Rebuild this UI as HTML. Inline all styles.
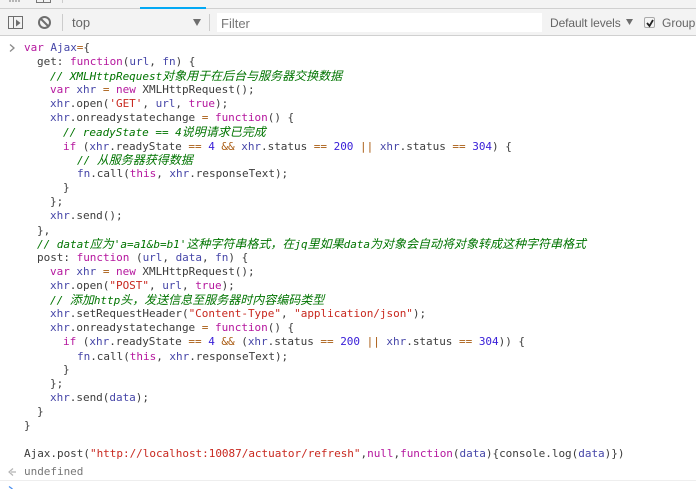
<!DOCTYPE html>
<html><head><meta charset="utf-8"><style>
html,body{margin:0;padding:0;background:#fff;width:696px;height:489px;overflow:hidden}
#w{position:relative;width:696px;height:489px;overflow:hidden}
.bar{position:absolute;left:0;top:9px;width:696px;height:26px;background:#f3f3f3}
.top{position:absolute;left:0;top:0;width:696px;height:8px;background:#f3f3f3}
.ab{position:absolute}
#code{position:absolute;left:0;top:1px;width:696px;height:488px;filter:blur(.25px)}
.l{position:absolute;white-space:pre;font:11px/14px "DejaVu Sans Mono","Noto Sans CJK SC",monospace;letter-spacing:-.025px;color:#3c3c3c;height:14px}
.k{color:#b5179e}.v{color:#4646a8}.s{color:#c8281f}.n{color:#3a20d8}.o{color:#a85a10}
.c{color:#007400;font-style:italic}
.z{font-family:"WenQuanYi Zen Hei","Noto Sans CJK SC",sans-serif;font-size:12px;letter-spacing:0}
.ui{position:absolute;font:12px/14px "Liberation Sans",sans-serif;color:#5a5a5a;white-space:pre}
</style></head><body><div id="w">
<div class="top"></div>
<div class="bar"></div>
<div class="ab" style="left:0;top:8px;width:696px;height:1px;background:#d0d0d0"></div>
<div class="ab" style="left:140px;top:7px;width:66px;height:2px;background:#03a9f4"></div>
<div class="ab" style="left:0;top:35px;width:696px;height:1px;background:#d0d0d0"></div>
<svg class="ab" style="left:0;top:0" width="120" height="36" viewBox="0 0 120 36">
<path d="M10 0v2M13 0v2M16 0v2M19 0v2" stroke="#777" stroke-width="1"/>
<path d="M36.500 0v2.500h14V0M43.500 0v2.500" fill="none" stroke="#777"/>
<path d="M62.500 0v3" stroke="#ccc"/>
<path d="M8.500 16.500h14v12h-14zM13.500 16.500v12" fill="none" stroke="#6e6e6e" stroke-width="1"/>
<path d="M16 19.500l4.500 3.500-4.500 3.500z" fill="#6e6e6e"/>
<circle cx="44.500" cy="22.500" r="5.500" fill="none" stroke="#6e6e6e" stroke-width="2"/>
<path d="M40.500 18.500l8 8" stroke="#6e6e6e" stroke-width="2"/>
<path d="M62.500 14v17" stroke="#ccc"/>
</svg>
<div class="ui" style="left:72px;top:16px;font-size:13px;color:#666">top</div>
<svg class="ab" style="left:190px;top:17px" width="14" height="10"><path d="M3 2h8l-4 7z" fill="#6e6e6e"/></svg>
<div class="ab" style="left:209px;top:14px;width:1px;height:17px;background:#ccc"></div>
<div class="ab" style="left:217px;top:13px;width:325px;height:19px;background:#fff"></div>
<div class="ui" style="left:221px;top:17px;color:#777;font-size:13px">Filter</div>
<div class="ui" style="left:550px;top:16px;letter-spacing:-.1px;color:#666">Default levels</div>
<svg class="ab" style="left:624px;top:17px" width="12" height="10"><path d="M2 2h7l-3.500 6z" fill="#6e6e6e"/></svg>
<div class="ab" style="left:644px;top:17px;width:9px;height:9px;border:1px solid #aaa;border-radius:2px;background:#f5f5f5"></div>
<svg class="ab" style="left:644px;top:17px" width="12" height="12"><path d="M3 6l2.500 3L9 3" fill="none" stroke="#222" stroke-width="1.800"/></svg>
<div class="ui" style="left:662px;top:16px;color:#666">Group</div>

<svg class="ab" style="left:8px;top:43px" width="10" height="10"><path d="M2 1.500l4 3.500-4 3.500" fill="none" stroke="#8a8a8a" stroke-width="1.300"/></svg>
<div id="code">
<div class="l" style="left:24px;top:40px"><span class="k">var</span> <span class="v">Ajax</span><span class="o">=</span>{</div>
<div class="l" style="left:37px;top:54px">get: <span class="k">function</span>(<span class="v">url</span>, <span class="v">fn</span>) {</div>
<div class="l c" style="left:50px;top:68px">// XMLHttpRequest<span class="z">对象用于在后台与服务器交换数据</span></div>
<div class="l" style="left:50px;top:82px"><span class="k">var</span> <span class="v">xhr</span> <span class="o">=</span> <span class="k">new</span> XMLHttpRequest();</div>
<div class="l" style="left:50px;top:96px"><span class="v">xhr</span>.open(<span class="s">'GET'</span>, <span class="v">url</span>, <span class="k">true</span>);</div>
<div class="l" style="left:50px;top:110px"><span class="v">xhr</span>.onreadystatechange <span class="o">=</span> <span class="k">function</span>() {</div>
<div class="l c" style="left:63px;top:124px">// readyState == 4<span class="z">说明请求已完成</span></div>
<div class="l" style="left:63px;top:139px"><span class="k">if</span> (<span class="v">xhr</span>.readyState <span class="o">==</span> <span class="n">4</span> <span class="o">&amp;&amp;</span> <span class="v">xhr</span>.status <span class="o">==</span> <span class="n">200</span> <span class="o">||</span> <span class="v">xhr</span>.status <span class="o">==</span> <span class="n">304</span>) {</div>
<div class="l c" style="left:77px;top:152px">// <span class="z">从服务器获得数据</span></div>
<div class="l" style="left:77px;top:166px"><span class="v">fn</span>.call(<span class="k">this</span>, <span class="v">xhr</span>.responseText);</div>
<div class="l" style="left:63px;top:180px">}</div>
<div class="l" style="left:50px;top:194px">};</div>
<div class="l" style="left:50px;top:208px"><span class="v">xhr</span>.send();</div>
<div class="l" style="left:37px;top:223px">},</div>
<div class="l c" style="left:37px;top:236px">// datat<span class="z">应为</span>'a=a1&amp;b=b1'<span class="z">这种字符串格式&#xFF0C;在</span>jq<span class="z">里如果</span>data<span class="z">为对象会自动将对象转成这种字符串格式</span></div>
<div class="l" style="left:37px;top:250px">post: <span class="k">function</span> (<span class="v">url</span>, <span class="v">data</span>, <span class="v">fn</span>) {</div>
<div class="l" style="left:50px;top:264px"><span class="k">var</span> <span class="v">xhr</span> <span class="o">=</span> <span class="k">new</span> XMLHttpRequest();</div>
<div class="l" style="left:50px;top:278px"><span class="v">xhr</span>.open(<span class="s">"POST"</span>, <span class="v">url</span>, <span class="k">true</span>);</div>
<div class="l c" style="left:50px;top:292px">// <span class="z">添加</span>http<span class="z">头&#xFF0C;发送信息至服务器时内容编码类型</span></div>
<div class="l" style="left:50px;top:306px"><span class="v">xhr</span>.setRequestHeader(<span class="s">"Content-Type"</span>, <span class="s">"application/json"</span>);</div>
<div class="l" style="left:50px;top:320px"><span class="v">xhr</span>.onreadystatechange <span class="o">=</span> <span class="k">function</span>() {</div>
<div class="l" style="left:63px;top:334px"><span class="k">if</span> (<span class="v">xhr</span>.readyState <span class="o">==</span> <span class="n">4</span> <span class="o">&amp;&amp;</span> (<span class="v">xhr</span>.status <span class="o">==</span> <span class="n">200</span> <span class="o">||</span> <span class="v">xhr</span>.status <span class="o">==</span> <span class="n">304</span>)) {</div>
<div class="l" style="left:77px;top:349px"><span class="v">fn</span>.call(<span class="k">this</span>, <span class="v">xhr</span>.responseText);</div>
<div class="l" style="left:63px;top:362px">}</div>
<div class="l" style="left:50px;top:376px">};</div>
<div class="l" style="left:50px;top:390px"><span class="v">xhr</span>.send(<span class="v">data</span>);</div>
<div class="l" style="left:37px;top:404px">}</div>
<div class="l" style="left:24px;top:418px">}</div>
<div class="l" style="left:24px;top:446px">Ajax.post(<span class="s">"http://localhost:10087/actuator/refresh"</span>,<span class="k">null</span>,<span class="k">function</span>(<span class="v">data</span>){console.log(<span class="v">data</span>)})</div>
<div class="l" style="left:24px;top:464px;color:#777">undefined</div>
</div>
<svg class="ab" style="left:7px;top:467px" width="10" height="10"><path d="M6 1.500L2 5l4 3.500M9 5H4" fill="none" stroke="#b5b5b5" stroke-width="1.200"/></svg>
<div class="ab" style="left:0;top:480px;width:696px;height:1px;background:#eee"></div>
<svg class="ab" style="left:7px;top:484px" width="10" height="5"><path d="M2 2.500l3.500 2.500" fill="none" stroke="#4a8ff0" stroke-width="1.300"/></svg>
</div></body></html>
